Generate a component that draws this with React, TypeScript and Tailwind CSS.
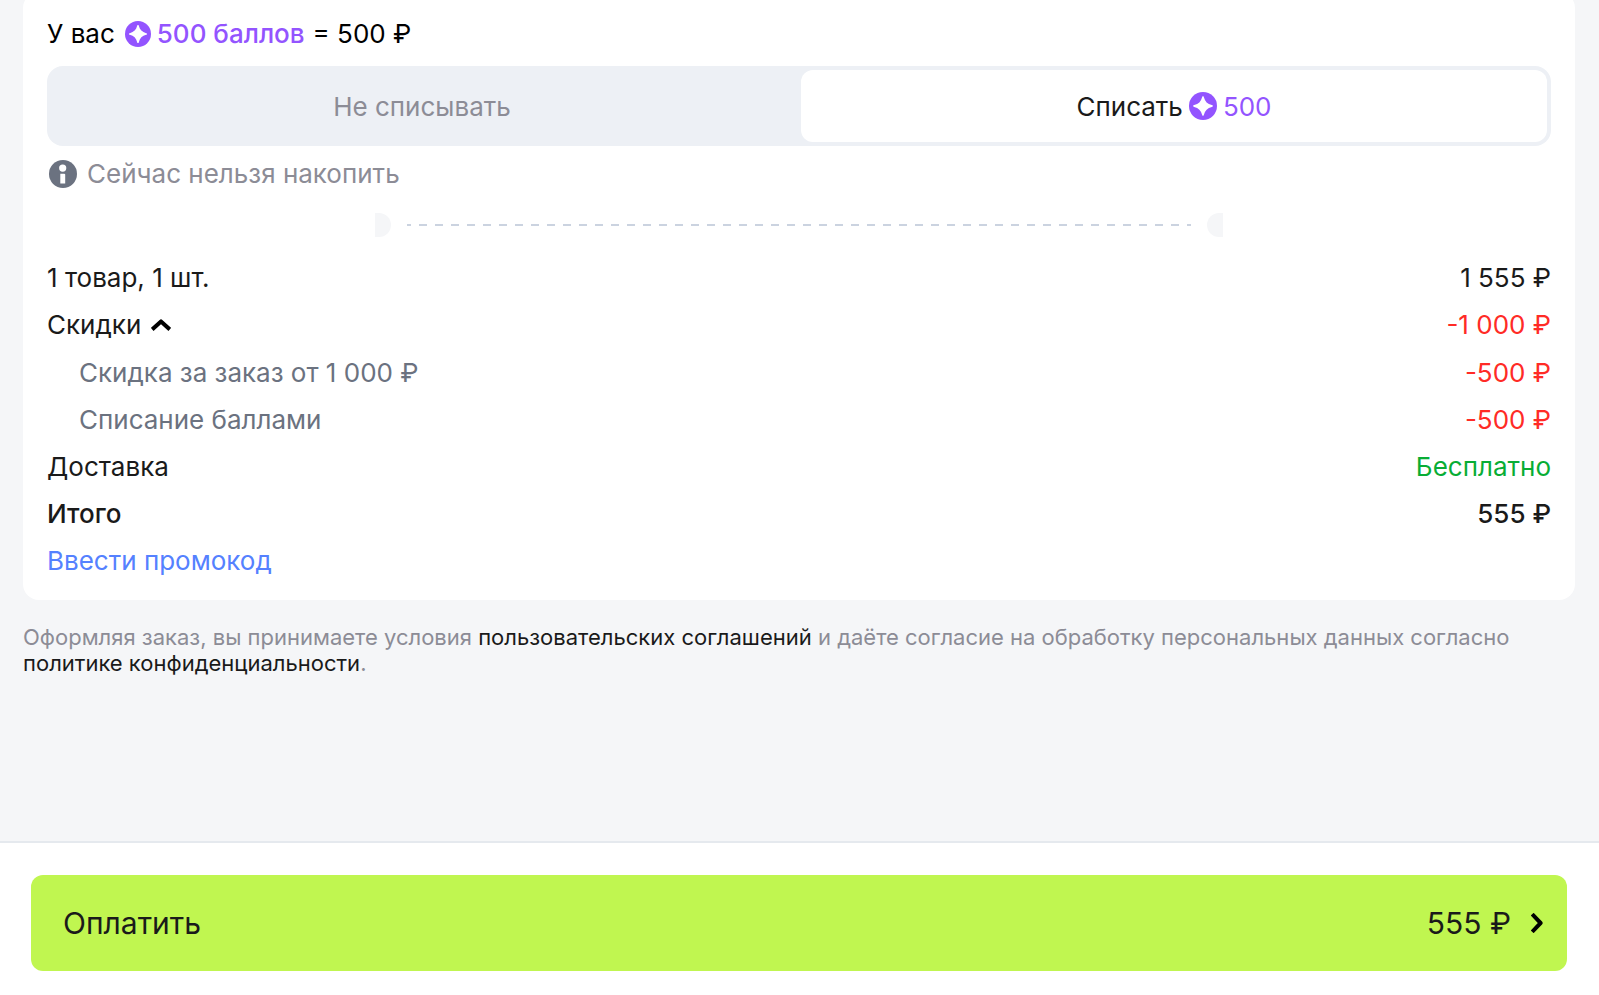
import React, { useState } from 'react'

function PointsIcon({ className }: { className?: string }) {
  return (
    <svg viewBox="0 0 28 28" className={className} aria-hidden="true">
      <circle cx="14" cy="14" r="14" fill="#9354ff" />
      <path
        d="M14 4.200C14.600 4.200 14.800 4.700 14.900 5.200C15.900 9.400 18.500 12.100 22.800 13.100C23.300 13.200 23.800 13.400 23.800 14C23.800 14.600 23.300 14.800 22.800 14.900C18.500 15.900 15.900 18.600 14.900 22.800C14.800 23.300 14.600 23.800 14 23.800C13.400 23.800 13.200 23.300 13.100 22.800C12.100 18.600 9.500 15.900 5.200 14.900C4.700 14.800 4.200 14.600 4.200 14C4.200 13.400 4.700 13.200 5.200 13.100C9.500 12.100 12.100 9.400 13.100 5.200C13.200 4.700 13.400 4.200 14 4.200Z"
        fill="#fff"
      />
    </svg>
  )
}

function InfoIcon() {
  return (
    <svg viewBox="0 0 28 28" className="size-7" aria-hidden="true">
      <circle cx="14" cy="14" r="14" fill="#6b7280" />
      <circle cx="13.700" cy="8.100" r="3.600" fill="#fff" />
      <path d="M11.300 13.800h3.900a1 1 0 0 1 1 1v8.600h-4.900z" fill="#fff" />
    </svg>
  )
}

function ChevronUp() {
  return (
    <svg viewBox="0 0 20 12" className="h-3 w-5" fill="none" stroke="#000" strokeWidth="4" strokeLinejoin="round" aria-hidden="true">
      <path d="M1.200 10.400L10 2.400l8.800 8" />
    </svg>
  )
}

function ChevronRight() {
  return (
    <svg viewBox="0 0 12 20" className="h-5 w-3" fill="none" stroke="#000" strokeWidth="4" strokeLinejoin="round" aria-hidden="true">
      <path d="M1.200 1.200L9.600 10l-8.400 8.800" />
    </svg>
  )
}

function Divider() {
  return (
    <div className="mx-auto mt-5 flex w-full max-w-[848px] items-center gap-4">
      <div className="h-6 w-4 rounded-r-full bg-[#f5f6f8]" />
      <div className="h-0.5 flex-1 bg-[repeating-linear-gradient(90deg,#cbd3e0_0_4px,transparent_4px_12px,#cbd3e0_12px_16px)]" />
      <div className="h-6 w-4 rounded-l-full bg-[#f5f6f8]" />
    </div>
  )
}

export default function App() {
  const [spend, setSpend] = useState(true)
  const [open, setOpen] = useState(true)

  return (
    <div className="flex min-h-screen flex-col bg-[#f5f6f8] font-['Inter',sans-serif] text-[#1a1a1a]">
      <main className="pr-6 pb-8 pl-[23px]">
        <section className="-mt-2 rounded-2xl bg-white px-6 pt-[22px] pb-5 text-[26px] leading-[39px]">
          <p className="flex items-center text-black">
            У вас
            <PointsIcon className="mr-1.5 ml-2.5 size-[26px]" />
            <span className="font-medium text-[#9354ff]">500 баллов</span>
            <span className="ml-2">= 500 ₽</span>
          </p>

          <div className="mt-[13px] grid h-20 grid-cols-2 gap-1 rounded-2xl bg-[#edf0f5] p-1">
            <label className="flex cursor-pointer items-center justify-center rounded-xl pr-1 text-[#8c8c96] has-checked:bg-white has-checked:text-[#1a1a1a]">
              <input type="radio" name="points" className="sr-only" checked={!spend} onChange={() => setSpend(false)} />
              Не списывать
            </label>
            <label className="flex cursor-pointer items-center justify-center rounded-xl text-[#8c8c96] has-checked:bg-white has-checked:text-[#1a1a1a]">
              <input type="radio" name="points" className="sr-only" checked={spend} onChange={() => setSpend(true)} />
              Списать
              <PointsIcon className="mx-1.5 size-7" />
              <span className="text-[#9354ff]">500</span>
            </label>
          </div>

          <p className="mt-2 flex items-center gap-2.5 pl-0.5 text-[#8c8c96]">
            <InfoIcon />
            Сейчас нельзя накопить
          </p>

          <Divider />

          <dl className="mt-[21px] flex flex-col gap-2">
            <div className="flex justify-between">
              <dt>1 товар, 1 шт.</dt>
              <dd>1 555 ₽</dd>
            </div>
            <div className="flex justify-between leading-10">
              <dt>
                <button type="button" className="flex cursor-pointer items-center gap-2.5" aria-expanded={open} onClick={() => setOpen(!open)}>
                  Скидки
                  <ChevronUp />
                </button>
              </dt>
              <dd className="text-[#ff2b26]">-1 000 ₽</dd>
            </div>
            {open && (
              <>
                <div className="flex justify-between pl-8">
                  <dt className="text-[#6b7280]">Скидка за заказ от 1 000 ₽</dt>
                  <dd className="text-[#ff2b26]">-500 ₽</dd>
                </div>
                <div className="flex justify-between pl-8">
                  <dt className="text-[#6b7280]">Списание баллами</dt>
                  <dd className="text-[#ff2b26]">-500 ₽</dd>
                </div>
              </>
            )}
            <div className="flex justify-between">
              <dt>Доставка</dt>
              <dd className="text-[#08ad35]">Бесплатно</dd>
            </div>
            <div className="flex justify-between font-medium">
              <dt>Итого</dt>
              <dd>555 ₽</dd>
            </div>
          </dl>
          <button type="button" className="mt-2 block cursor-pointer text-[#5581ff]">Ввести промокод</button>
        </section>

        <p className="mt-6 text-[22px] leading-[26px] text-[#8c8c96]">
          Оформляя заказ, вы принимаете условия <a href="#" className="text-[#1a1a1a]">пользовательских соглашений</a> и даёте согласие на обработку персональных данных согласно <a href="#" className="text-[#1a1a1a]">политике конфиденциальности</a>.
        </p>
      </main>

      <footer className="mt-auto border-t-2 border-[#e5e9ee] bg-white pt-8 pr-8 pb-6 pl-[31px]">
        <button type="button" className="flex h-24 w-full cursor-pointer items-center justify-between rounded-xl bg-[#c0f650] pr-6 pl-8 text-[30px]">
          <span>Оплатить</span>
          <span className="flex items-center gap-5">
            555 ₽
            <ChevronRight />
          </span>
        </button>
      </footer>
    </div>
  )
}
